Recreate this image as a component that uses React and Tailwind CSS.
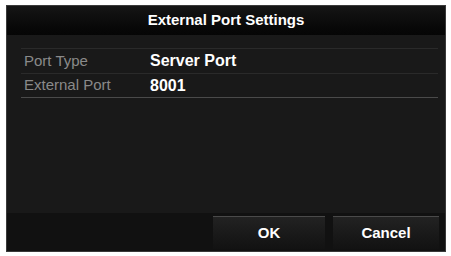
import React from 'react';

const Row = ({ label, value, last }) => (
  <div className={`flex items-center h-[25px] border-t border-[#2a2a2a] ${last ? 'border-b border-b-[#4a4a4a]' : ''}`}>
    <span className="w-[129px] shrink-0 pl-[3px] text-[#8a8a8a] text-[15px]">{label}</span>
    <span className="text-white text-[16px] font-bold">{value}</span>
  </div>
);

export default function App() {
  return (
    <div className="w-[451px] h-[256px] bg-white pt-[5px] pl-[6px]" style={{ fontFamily: '"Liberation Sans", Arial, sans-serif' }}>
      <div className="w-[440px] h-[247px] bg-[#191919] flex flex-col border border-[#3a3a3a]">
        <div className="h-[29px] bg-gradient-to-b from-[#151515] to-[#050505] flex items-center justify-center">
          <span className="text-white text-[15px] font-bold">External Port Settings</span>
        </div>
        <div className="flex-1 pl-[14px] pr-[7px] pt-[13px]">
          <Row label="Port Type" value="Server Port" />
          <Row label="External Port" value="8001" last />
        </div>
        <div className="h-[38px] bg-[#111] flex items-end justify-end gap-[8px] pr-[6px] pb-[2px]">
          <button className="w-[112px] h-[33px] bg-gradient-to-b from-[#222] to-[#121212] border-t border-[#4a4a4a] text-white text-[15px] font-bold">OK</button>
          <button className="w-[106px] h-[33px] bg-gradient-to-b from-[#222] to-[#121212] border-t border-[#4a4a4a] text-white text-[15px] font-bold">Cancel</button>
        </div>
      </div>
    </div>
  );
}
